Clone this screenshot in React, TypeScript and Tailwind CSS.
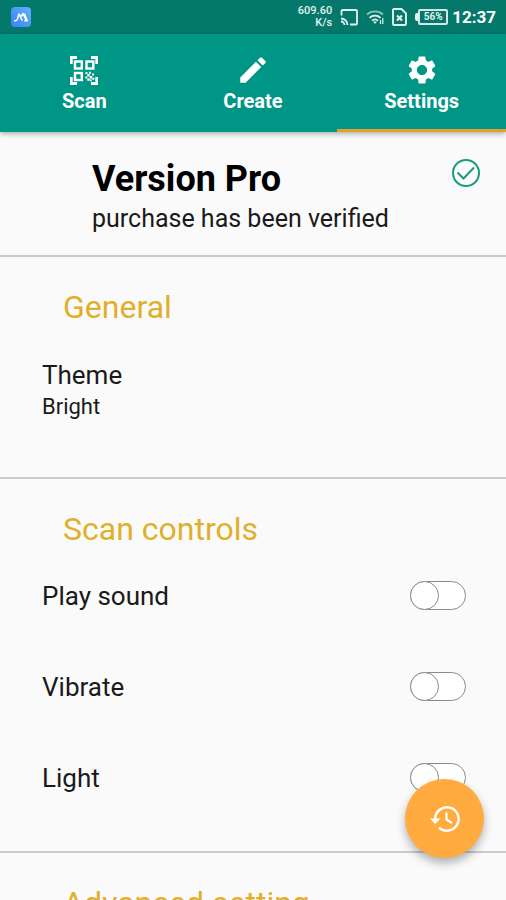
import React from "react";
import { MdEdit, MdSettings } from "react-icons/md";

interface TabItem {
  label: string;
  icon: React.ReactNode;
  active?: boolean;
}

const QrScanIcon = () => (
  <svg viewBox="0 0 28 29" className="h-[29px] w-7" fill="currentColor" aria-hidden="true">
    <path d="M0 0h7v3H2.700v5H0zM21 0h7v8h-2.700V3H21zM0 21h2.700v5H7v3H0zM25.300 21H28v8h-7v-3h4.300z" />
    <g fill="none" stroke="currentColor" strokeWidth="2.400">
      <rect x="5" y="5.500" width="6.800" height="7" />
      <rect x="16.500" y="5.500" width="6.800" height="7" />
      <rect x="5" y="17" width="6.800" height="7" />
    </g>
    <path d="M15.500 16h2v2h-2zM19 15.800h2v2h-2zM22 17.500h2v2h-2zM17.300 18h2.400v2.400h-2.400zM15.300 20.400h2v2h-2zM19.700 20h2.400v2.400h-2.400zM22.300 21.800h2v2h-2zM17.300 22.400h2.400v2.400h-2.400zM20 23.400h1.800v1.800H20z" />
  </svg>
);

const HistoryIcon = () => (
  <svg viewBox="0 0 30 28" className="h-7 w-[30px]" fill="none" stroke="currentColor" strokeWidth="2.400" aria-hidden="true">
    <path d="M5.200 14a11.700 11.700 0 1 1 3.800 8.600" />
    <path d="M0 13.500h10.500L5.200 19z" fill="currentColor" stroke="none" />
    <path d="M16.500 7.500v7l5.500 3.600" strokeWidth="2.200" />
  </svg>
);

const tabs: TabItem[] = [
  { label: "Scan", icon: <QrScanIcon /> },
  { label: "Create", icon: <MdEdit className="size-[34px]" /> },
  { label: "Settings", icon: <MdSettings className="size-[34px]" />, active: true },
];

const scanControls = ["Play sound", "Vibrate", "Light"];

const StatusBar = () => (
  <div className="flex h-[34px] shrink-0 items-center justify-between bg-[#04796b] pr-[10px] pl-[11px] text-[#e3f1ef]">
    <svg viewBox="0 0 20 20" className="size-5" aria-hidden="true">
      <defs>
        <linearGradient id="app" x1="1" y1="0" x2="0" y2="1">
          <stop offset="0" stopColor="#5bb5f8" />
          <stop offset="1" stopColor="#3d7ff5" />
        </linearGradient>
      </defs>
      <rect width="20" height="20" rx="4" fill="url(#app)" />
      <path
        d="M3 13.700h1.500c1 0 1.500-.7 1.900-1.700L8 7l3.300 6.700M10 9.500L11.900 6.500l3.100 6.500M13.300 6.500l3 7.200h-3"
        fill="none"
        stroke="#fff"
        strokeWidth="1.500"
        strokeLinejoin="round"
      />
    </svg>
    <div className="flex items-center">
      <div className="mr-2 text-right text-[11px] leading-3 font-medium">
        <div>609.60</div>
        <div>K/s</div>
      </div>
      <svg viewBox="0 0 18 17" className="mr-2 h-[17px] w-[18px]" fill="none" stroke="currentColor" strokeWidth="1.800" aria-hidden="true">
        <path d="M1.500 6.500V2a1 1 0 0 1 1-1h13.500a1 1 0 0 1 1 1v12.500a1 1 0 0 1-1 1H10" />
        <path d="M1 9.500a6.500 6.500 0 0 1 6.500 6.500M1 12.500a3.500 3.500 0 0 1 3.500 3.500" />
      </svg>
      <svg viewBox="0 0 18 16" className="mr-2 h-4 w-[18px]" fill="none" stroke="currentColor" strokeWidth="1.800" aria-hidden="true">
        <path d="M1 5.500a12 12 0 0 1 16 0" opacity="0.600" />
        <path d="M3.500 8.800a8 8 0 0 1 11 0" />
        <path d="M6 11.700a4.500 4.500 0 0 1 6 0" />
        <path d="M7 12.500h4L9 15z" fill="currentColor" stroke="none" />
        <path d="M14.500 11v4M16.800 9v6" strokeWidth="1.200" />
      </svg>
      <svg viewBox="0 0 15 18" className="mr-2 h-[18px] w-[15px]" fill="none" stroke="currentColor" strokeWidth="1.900" aria-hidden="true">
        <path d="M2 1h7.500L14 5.500V16a1 1 0 0 1-1 1H2a1 1 0 0 1-1-1V2a1 1 0 0 1 1-1z" />
        <path d="M5 7.500l5 5M10 7.500l-5 5" strokeWidth="2.200" />
      </svg>
      <div className="mr-1 flex items-center">
        <span className="h-2 w-[3px] rounded-l-xs bg-[#e3f1ef]" />
        <span className="flex h-4 w-[30px] items-center justify-center rounded-xs border-2 border-[#d3e8e5] text-[10px] leading-3 font-bold">
          56%
        </span>
      </div>
      <span className="text-[17px] leading-5 font-bold text-white">12:37</span>
    </div>
  </div>
);

const TabBar = () => (
  <nav className="z-10 grid h-[98px] shrink-0 grid-cols-3 bg-[#009686] shadow-[0_2px_5px_rgba(0,0,0,0.300)]">
    {tabs.map((tab) => (
      <button
        key={tab.label}
        type="button"
        aria-current={tab.active ? "page" : undefined}
        className={
          tab.active
            ? "flex flex-col items-center border-b-[3px] border-[#e3a02c] pt-5 text-white"
            : "flex flex-col items-center border-b-[3px] border-transparent pt-5 text-white"
        }
      >
        <span className="flex h-8 items-center">{tab.icon}</span>
        <span className="mt-[3px] text-[20px] leading-6 font-bold">{tab.label}</span>
      </button>
    ))}
  </nav>
);

const Section: React.FC<{ title: string; children?: React.ReactNode }> = ({ title, children }) => (
  <section className="border-b-2 border-[#cbcbcb] pt-[30px]">
    <h2 className="pl-[63px] text-[32px] leading-10 text-[#dfb02c]">{title}</h2>
    {children}
  </section>
);

const ToggleRow: React.FC<{ label: string }> = ({ label }) => (
  <label className="flex h-[91px] items-center justify-between pr-10 pl-[42px] text-[26px] leading-8">
    {label}
    <input
      type="checkbox"
      role="switch"
      className="block h-[29px] w-14 appearance-none rounded-full border border-[#8a8a8a] bg-white before:-m-px before:block before:size-[29px] before:rounded-full before:border before:border-[#8a8a8a] before:bg-white checked:bg-[#009686] checked:before:translate-x-[27px]"
    />
  </label>
);

export default function App() {
  return (
    <div className="relative flex h-screen flex-col overflow-hidden bg-[#fafafa] font-[Roboto,sans-serif] text-[#1a1a1a]">
      <StatusBar />
      <TabBar />
      <main className="flex-1 overflow-y-auto [scrollbar-width:none]">
        <section className="flex items-start justify-between border-b-2 border-[#cbcbcb] pt-[27px] pr-[26px] pb-5 pl-[92px]">
          <div>
            <h1 className="text-[36px] leading-10 font-bold text-black">Version Pro</h1>
            <p className="pt-1 text-[25px] leading-8">purchase has been verified</p>
          </div>
          <svg viewBox="0 0 28 28" className="size-7" fill="none" stroke="#1a9a80" strokeWidth="2" aria-label="Verified">
            <circle cx="14" cy="14" r="13" />
            <path d="M5.500 13.500l6 6L22 8.500" />
          </svg>
        </section>
        <Section title="General">
          <button type="button" className="block w-full pt-8 pb-[54px] pl-[42px] text-left">
            <span className="block text-[26px] leading-8">Theme</span>
            <span className="block text-[22px] leading-8">Bright</span>
          </button>
        </Section>
        <Section title="Scan controls">
          <div className="pt-px pb-7">
            {scanControls.map((label) => (
              <ToggleRow key={label} label={label} />
            ))}
          </div>
        </Section>
        <Section title="Advanced setting" />
      </main>
      <button
        type="button"
        aria-label="History"
        className="absolute right-[22px] bottom-[42px] z-20 flex size-[79px] items-center justify-center rounded-full bg-[#ffab40] text-white shadow-[0_5px_10px_rgba(0,0,0,0.300)]"
      >
        <HistoryIcon />
      </button>
    </div>
  );
}
